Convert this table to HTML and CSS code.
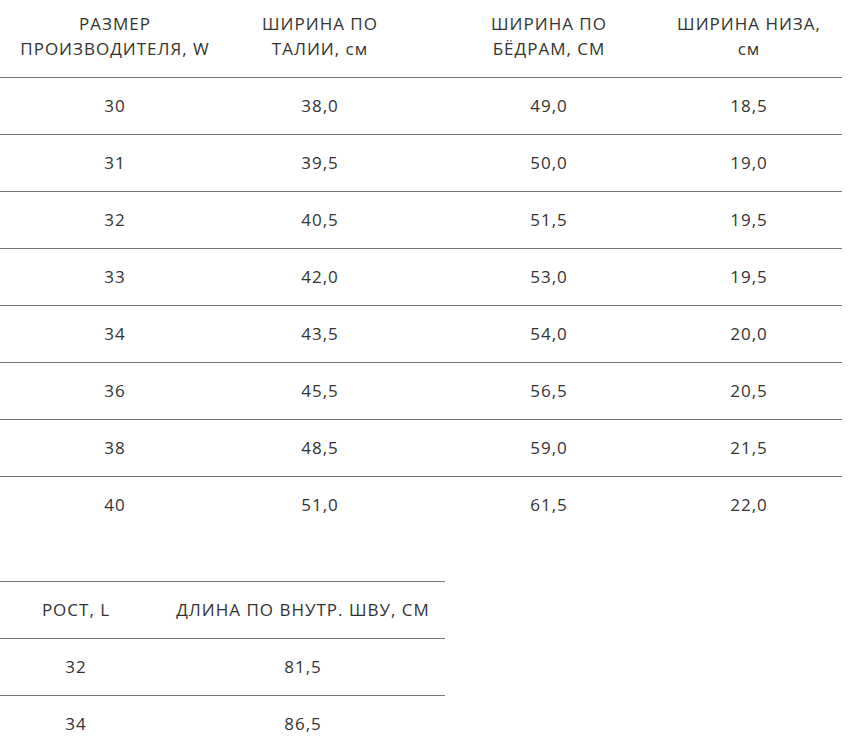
FILE: index.html
```html
<!DOCTYPE html>
<html lang="ru">
<head>
<meta charset="utf-8">
<link rel="stylesheet" href="styles.css">
</head>
<body>
<div class="table t1">
  <div class="row head">
    <div class="cell"><span>РАЗМЕР<br>ПРОИЗВОДИТЕЛЯ, W</span></div>
    <div class="cell"><span>ШИРИНА ПО<br>ТАЛИИ, см</span></div>
    <div class="cell"><span>ШИРИНА ПО<br>БЁДРАМ, СМ</span></div>
    <div class="cell"><span>ШИРИНА НИЗА,<br>см</span></div>
  </div>
  <div class="row"><div class="cell">30</div><div class="cell">38,0</div><div class="cell">49,0</div><div class="cell">18,5</div></div>
  <div class="row"><div class="cell">31</div><div class="cell">39,5</div><div class="cell">50,0</div><div class="cell">19,0</div></div>
  <div class="row"><div class="cell">32</div><div class="cell">40,5</div><div class="cell">51,5</div><div class="cell">19,5</div></div>
  <div class="row"><div class="cell">33</div><div class="cell">42,0</div><div class="cell">53,0</div><div class="cell">19,5</div></div>
  <div class="row"><div class="cell">34</div><div class="cell">43,5</div><div class="cell">54,0</div><div class="cell">20,0</div></div>
  <div class="row"><div class="cell">36</div><div class="cell">45,5</div><div class="cell">56,5</div><div class="cell">20,5</div></div>
  <div class="row"><div class="cell">38</div><div class="cell">48,5</div><div class="cell">59,0</div><div class="cell">21,5</div></div>
  <div class="row last"><div class="cell">40</div><div class="cell">51,0</div><div class="cell">61,5</div><div class="cell">22,0</div></div>
</div>
<div class="table t2">
  <div class="row head">
    <div class="cell"><span>РОСТ, L</span></div>
    <div class="cell"><span>ДЛИНА ПО ВНУТР. ШВУ, СМ</span></div>
  </div>
  <div class="row"><div class="cell">32</div><div class="cell">81,5</div></div>
  <div class="row last"><div class="cell">34</div><div class="cell">86,5</div></div>
</div>
</body>
</html>
```
FILE: styles.css
```css
html, body {
  margin: 0;
  padding: 0;
  background: #fff;
}
body {
  font-family: "Open Sans", "Noto Sans", sans-serif;
  font-size: 17px;
  letter-spacing: 1px;
  color: #333;
}
.table {
  display: flex;
  flex-direction: column;
}
.row {
  display: grid;
  height: 57px;
  padding-bottom: 1px;
  border-bottom: 1px solid #777;
  box-sizing: border-box;
}
.row.last {
  border-bottom: none;
  height: 56px;
}
.t1 {
  width: 842px;
}
.t1 .row {
  grid-template-columns: 230px 180px 278px 122px;
}
.t1 .row.head {
  height: 78px;
  padding-bottom: 6px;
}
.t2 {
  width: 445px;
  margin-top: 48px;
  border-top: 1px solid #777;
}
.t2 .row {
  grid-template-columns: 152px 302px;
}
.cell {
  display: flex;
  justify-content: center;
  align-items: center;
  white-space: nowrap;
  text-align: center;
}
.head .cell span {
  line-height: 25px;
}
```
